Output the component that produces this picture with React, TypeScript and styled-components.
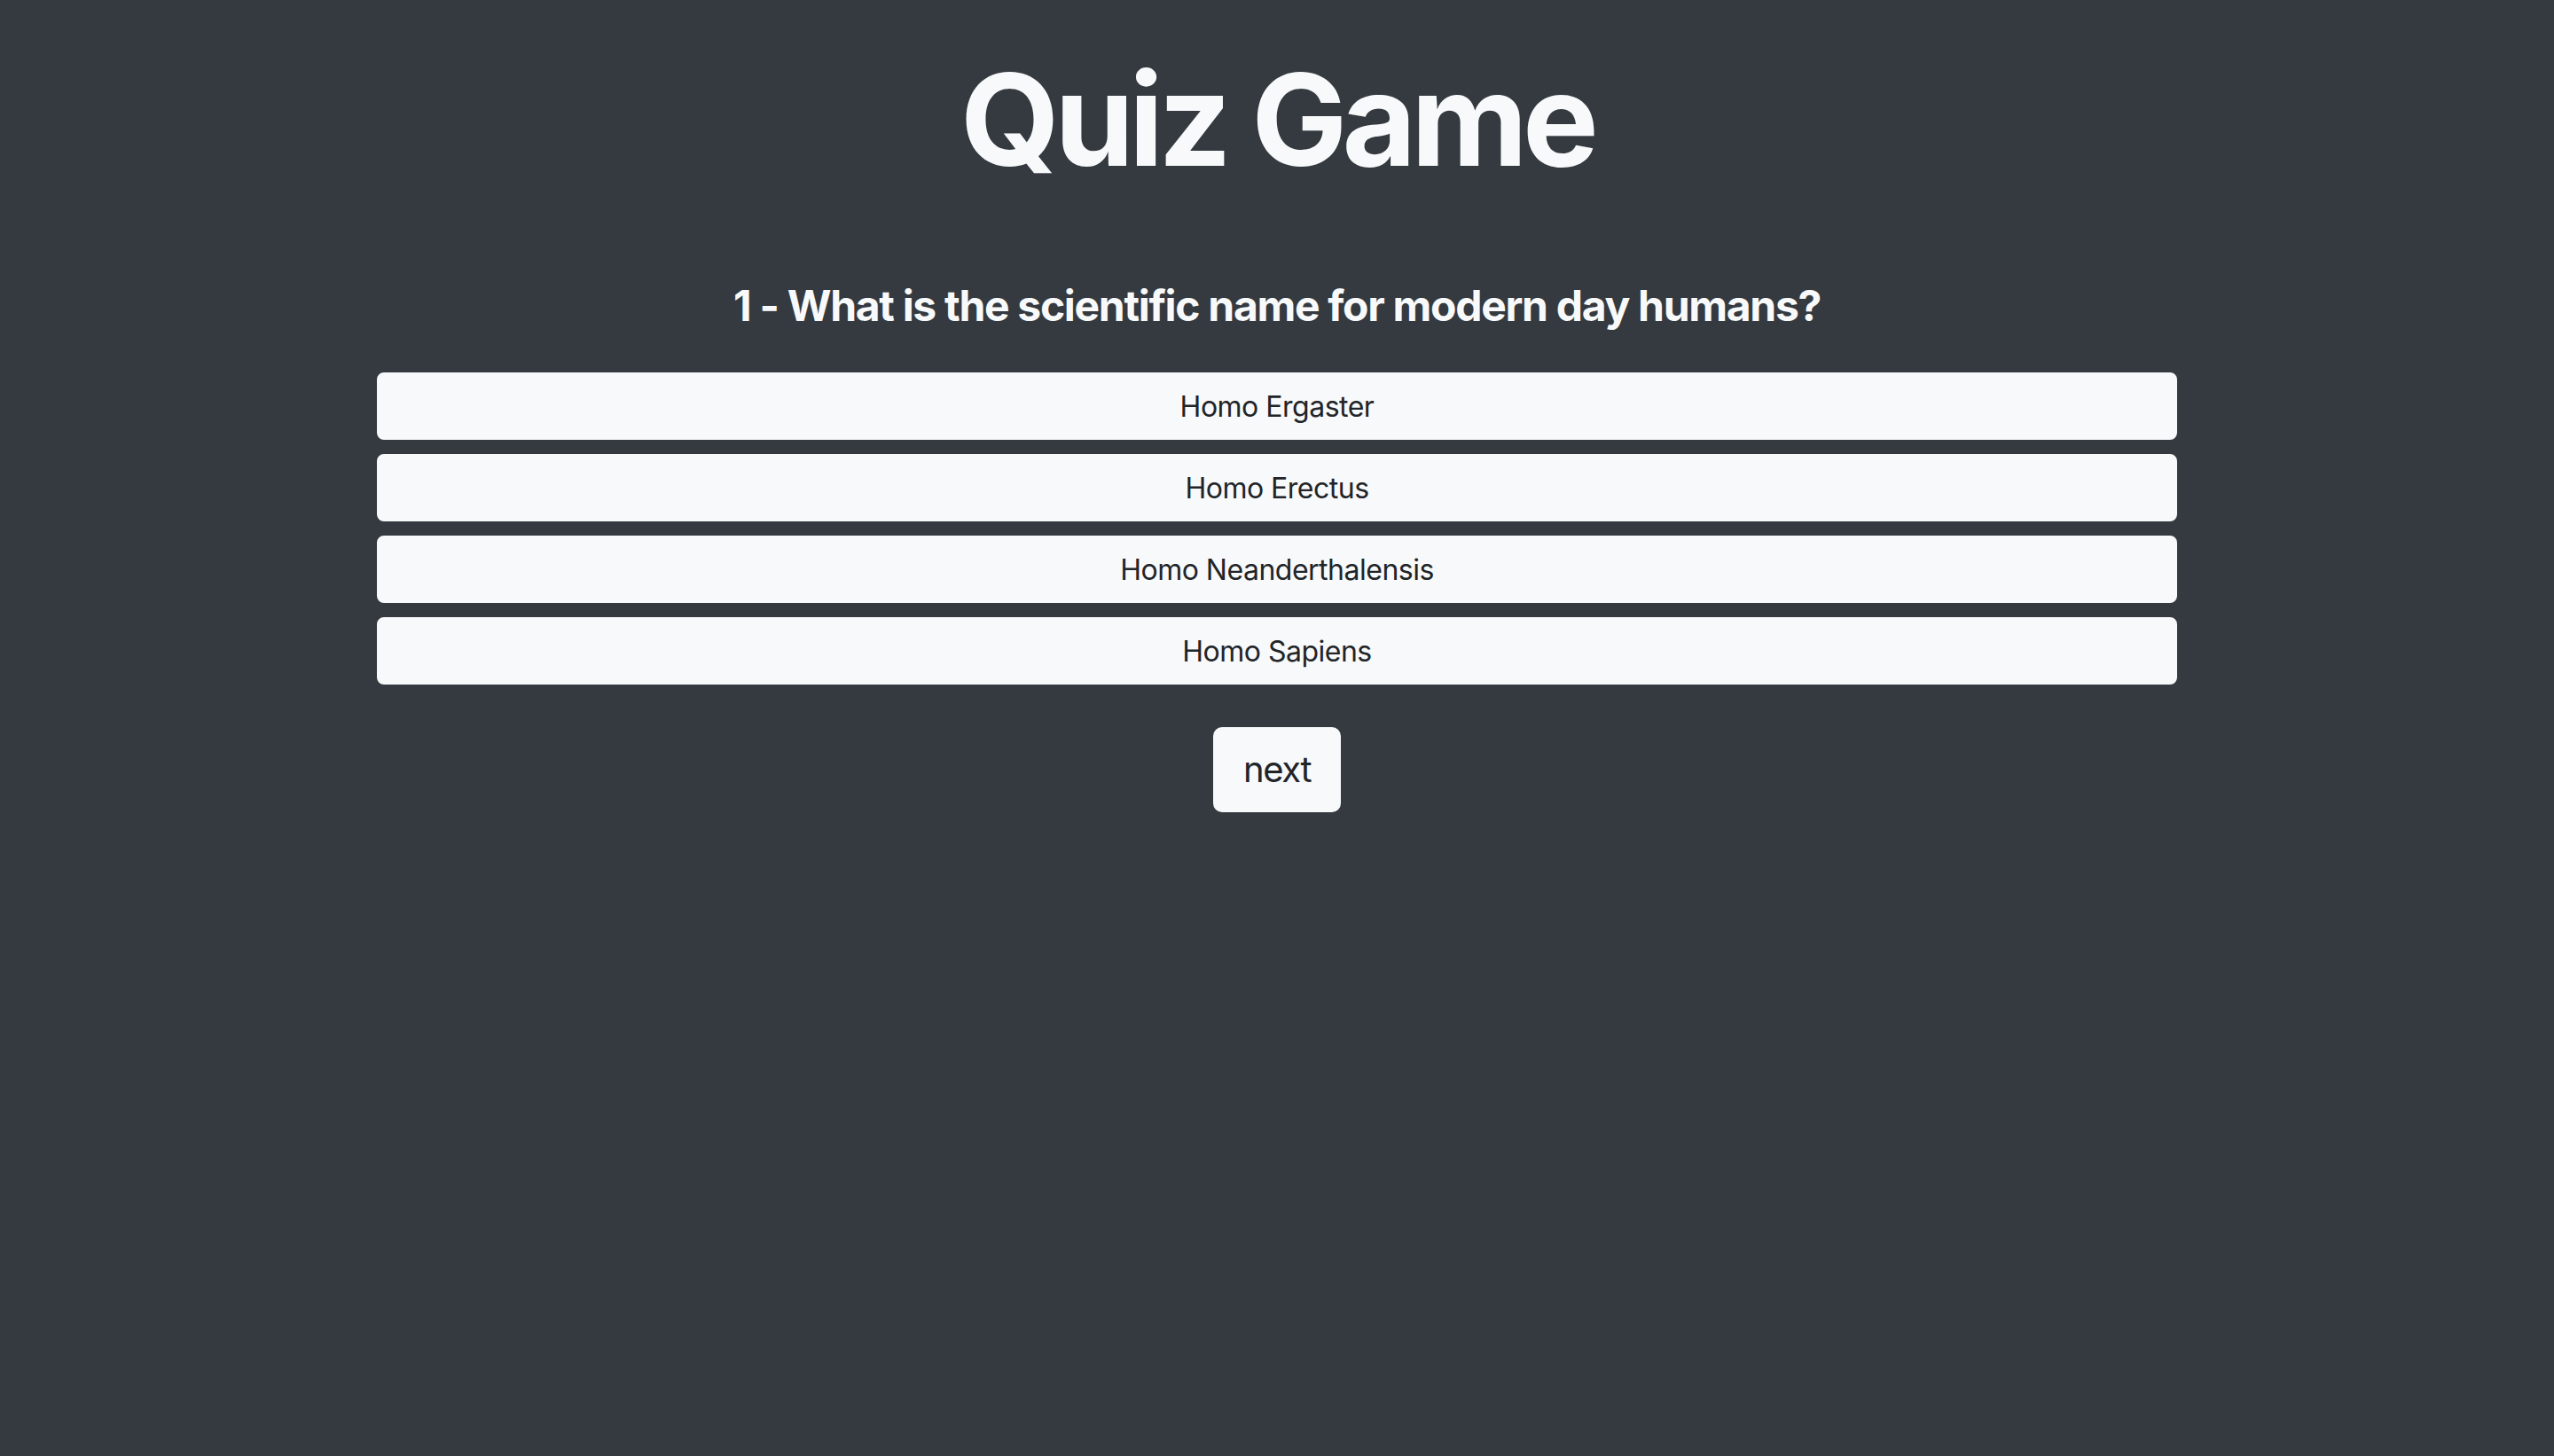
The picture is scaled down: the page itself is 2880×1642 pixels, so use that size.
import React, { useState } from 'react'
import styled, { createGlobalStyle } from 'styled-components'

const GlobalStyle = createGlobalStyle`
  html, body {
    margin: 0;
    padding: 0;
    background: #343a40;
  }
  body {
    font-family: Inter, "Noto Sans", "Liberation Sans", sans-serif;
    color: #f8f9fa;
    min-height: 100vh;
  }
`

const Page = styled.main`
  min-height: 100vh;
  padding-top: 49px;
  box-sizing: border-box;
`

const Title = styled.h1`
  margin: 0;
  text-align: center;
  font-size: 144px;
  line-height: 1.2;
  font-weight: 700;
  letter-spacing: -5.8px;
  color: #f8f9fa;
`

const Quiz = styled.section`
  width: 2030px;
  margin: 94px auto 0;
  display: flex;
  flex-direction: column;
  align-items: center;
`

const Question = styled.h4`
  margin: 0 0 47px;
  font-size: 48px;
  line-height: 1.2;
  font-weight: 700;
  letter-spacing: -1.3px;
  color: #f8f9fa;
`

const Options = styled.div`
  width: 100%;
  display: flex;
  flex-direction: column;
  gap: 16px;
`

const Button = styled.button<{ $large?: boolean; $selected?: boolean }>`
  font-family: inherit;
  font-weight: 400;
  font-size: ${p => (p.$large ? '40px' : '32px')};
  line-height: 1.5;
  letter-spacing: ${p => (p.$large ? '-1.4px' : '-0.5px')};
  padding: ${p => (p.$large ? '16px 32px' : '13px 24px 11px')};
  border-radius: ${p => (p.$large ? '10px' : '8px')};
  border: 2px solid ${p => (p.$selected ? '#dae0e5' : '#f8f9fa')};
  background: ${p => (p.$selected ? '#e2e6ea' : '#f8f9fa')};
  color: #212529;
  cursor: pointer;
  text-align: center;
`

const OptionButton = styled(Button)`
  width: 100%;
  display: block;
`

const NextButton = styled(Button)`
  margin-top: 48px;
`

const question = {
  text: 'What is the scientific name for modern day humans?',
  options: ['Homo Ergaster', 'Homo Erectus', 'Homo Neanderthalensis', 'Homo Sapiens'],
}

const App = () => {
  const [selected, setSelected] = useState<number | null>(null)

  return (
    <>
      <GlobalStyle />
      <Page>
        <Title>Quiz Game</Title>
        <Quiz>
          <Question>1 - {question.text}</Question>
          <Options>
            {question.options.map((opt, i) => (
              <OptionButton key={opt} $selected={selected === i} onClick={() => setSelected(i)}>
                {opt}
              </OptionButton>
            ))}
          </Options>
          <NextButton $large>next</NextButton>
        </Quiz>
      </Page>
    </>
  )
}

export default App
